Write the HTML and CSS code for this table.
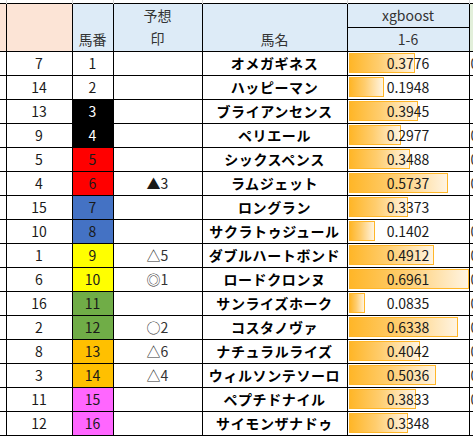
FILE: index.html
```html
<!DOCTYPE html>
<html lang="ja">
<head>
    <meta charset="UTF-8">
    <title>予想</title>
    <link rel="stylesheet" href="styles.css">
</head>
<body>
    <table class="sheet">
        <colgroup>
            <col class="c-edge">
            <col class="c-rank">
            <col class="c-no">
            <col class="c-mark">
            <col class="c-name">
            <col class="c-score">
            <col class="c-next">
        </colgroup>
        <tr class="grid">
            <td></td><td></td><td></td><td></td><td></td><td></td><td></td>
        </tr>
        <tr class="head">
            <th rowspan="2" class="peach"></th>
            <th rowspan="2" class="peach"></th>
            <th rowspan="2" class="blue bottom">馬番</th>
            <th rowspan="2" class="blue">予想<br>印</th>
            <th rowspan="2" class="blue bottom">馬名</th>
            <th class="blue">xgboost</th>
            <th rowspan="2" class="green"></th>
        </tr>
        <tr class="head">
            <th class="blue">1-6</th>
        </tr>

        <tr><td></td><td>7</td><td>1</td><td></td><td class="name">オメガギネス</td><td class="score"><div class="cell"><span class="bar" style="width:64px"></span><span class="val">0.3776</span></div></td><td class="next">0</td></tr>
        <tr><td></td><td>14</td><td>2</td><td></td><td class="name">ハッピーマン</td><td class="score"><div class="cell"><span class="bar" style="width:33px"></span><span class="val">0.1948</span></div></td><td class="next"></td></tr>
        <tr><td></td><td>13</td><td class="waku-black">3</td><td></td><td class="name">ブライアンセンス</td><td class="score"><div class="cell"><span class="bar" style="width:67px"></span><span class="val">0.3945</span></div></td><td class="next"></td></tr>
        <tr><td></td><td>9</td><td class="waku-black">4</td><td></td><td class="name">ペリエール</td><td class="score"><div class="cell"><span class="bar" style="width:50px"></span><span class="val">0.2977</span></div></td><td class="next">0</td></tr>
        <tr><td></td><td>5</td><td class="waku-red">5</td><td></td><td class="name">シックスペンス</td><td class="score"><div class="cell"><span class="bar" style="width:59px"></span><span class="val">0.3488</span></div></td><td class="next">0</td></tr>
        <tr><td></td><td>4</td><td class="waku-red">6</td><td>▲3</td><td class="name">ラムジェット</td><td class="score"><div class="cell"><span class="bar" style="width:97px"></span><span class="val">0.5737</span></div></td><td class="next">0</td></tr>
        <tr><td></td><td>15</td><td class="waku-blue">7</td><td></td><td class="name">ロングラン</td><td class="score"><div class="cell"><span class="bar" style="width:57px"></span><span class="val">0.3373</span></div></td><td class="next"></td></tr>
        <tr><td></td><td>10</td><td class="waku-blue">8</td><td></td><td class="name">サクラトゥジュール</td><td class="score"><div class="cell"><span class="bar" style="width:24px"></span><span class="val">0.1402</span></div></td><td class="next">0</td></tr>
        <tr><td></td><td>1</td><td class="waku-yellow">9</td><td class="mark">△5</td><td class="name">ダブルハートボンド</td><td class="score"><div class="cell"><span class="bar" style="width:83px"></span><span class="val">0.4912</span></div></td><td class="next">0</td></tr>
        <tr><td></td><td>6</td><td class="waku-yellow">10</td><td class="mark">◎1</td><td class="name">ロードクロンヌ</td><td class="score"><div class="cell"><span class="bar" style="width:118px"></span><span class="val">0.6961</span></div></td><td class="next">0</td></tr>
        <tr><td></td><td>16</td><td class="waku-green">11</td><td></td><td class="name">サンライズホーク</td><td class="score"><div class="cell"><span class="bar" style="width:14px"></span><span class="val">0.0835</span></div></td><td class="next">0</td></tr>
        <tr><td></td><td>2</td><td class="waku-green">12</td><td class="mark">○2</td><td class="name">コスタノヴァ</td><td class="score"><div class="cell"><span class="bar" style="width:107px"></span><span class="val">0.6338</span></div></td><td class="next">0</td></tr>
        <tr><td></td><td>8</td><td class="waku-orange">13</td><td class="mark">△6</td><td class="name">ナチュラルライズ</td><td class="score"><div class="cell"><span class="bar" style="width:69px"></span><span class="val">0.4042</span></div></td><td class="next">0</td></tr>
        <tr><td></td><td>3</td><td class="waku-orange">14</td><td class="mark">△4</td><td class="name">ウィルソンテソーロ</td><td class="score"><div class="cell"><span class="bar" style="width:85px"></span><span class="val">0.5036</span></div></td><td class="next">0</td></tr>
        <tr><td></td><td>11</td><td class="waku-pink">15</td><td></td><td class="name">ペプチドナイル</td><td class="score"><div class="cell"><span class="bar" style="width:65px"></span><span class="val">0.3833</span></div></td><td class="next">0</td></tr>
        <tr><td></td><td>12</td><td class="waku-pink">16</td><td></td><td class="name">サイモンザナドゥ</td><td class="score"><div class="cell"><span class="bar" style="width:57px"></span><span class="val">0.3348</span></div></td><td class="next"></td></tr>
    </table>
</body>
</html>
```

FILE: styles.css
```css
body {
    margin: 0;
    background: #fff;
    font-family: "Noto Sans CJK JP", "Noto Sans", sans-serif;
    color: #1a1a1a;
    overflow: hidden;
}

.sheet {
    border-collapse: collapse;
    table-layout: fixed;
    width: 480px;
}

.c-edge { width: 6px; }
.c-rank { width: 66px; }
.c-no { width: 41px; }
.c-mark { width: 89px; }
.c-name { width: 145px; }
.c-score { width: 122px; }
.c-next { width: 11px; }

.sheet td,
.sheet th {
    height: 23px;
    padding: 0;
    border: 1px solid #000;
    text-align: center;
    font-size: 14px;
    font-weight: 400;
    line-height: 23px;
    white-space: nowrap;
    overflow: hidden;
}

.sheet td:first-child,
.sheet th:first-child {
    border-left: none;
}

.sheet td:last-child,
.sheet th:last-child {
    border-right: none;
}

/* gridlines above the header */
.grid td {
    height: 3px;
    line-height: 3px;
    border: none;
    border-right: 1px solid #d9d9d9;
}

/* header */
.head th {
    color: #333;
    vertical-align: top;
}

.head th.bottom {
    vertical-align: bottom;
}

.peach { background: #fce4d6; }
.blue { background: #ddebf7; }
.green { background: #e2efda; }

/* waku colours */
.waku-black { background: #000; color: #fff; }
.waku-red { background: #ff0000; }
.waku-blue { background: #4472c4; }
.waku-yellow { background: #ffff00; }
.waku-green { background: #70ad47; }
.waku-orange { background: #ffc000; }
.waku-pink { background: #ff66ff; }

.mark {
    color: #333;
}

.name {
    font-weight: 700 !important;
    color: #000;
    letter-spacing: 0.6px;
}

/* data bar */
.score .cell {
    position: relative;
    height: 23px;
}

.bar {
    position: absolute;
    left: 1px;
    top: 1px;
    height: 18px;
    border: 1px solid #ffb628;
    background: linear-gradient(to right, #ffb628 0%, #ffcd6e 45%, #fff4e2 100%);
}

.val {
    position: relative;
}

.next {
    text-align: left !important;
    padding-left: 1px !important;
    color: #333;
}
```
